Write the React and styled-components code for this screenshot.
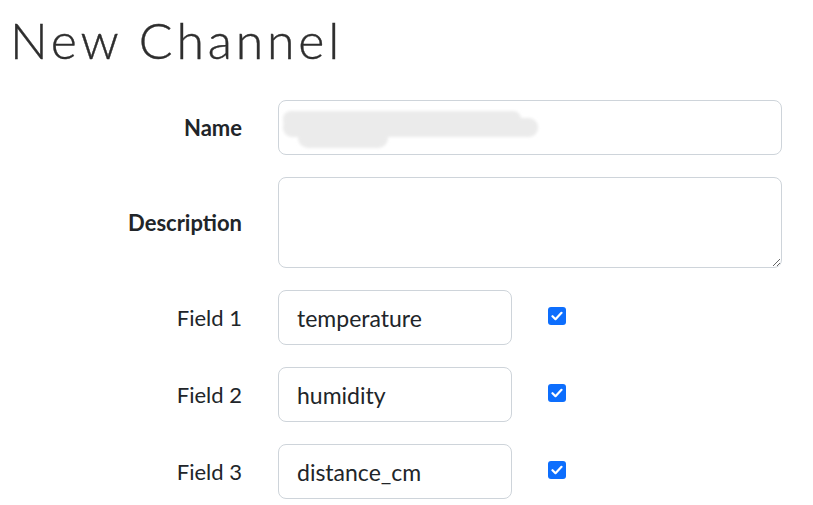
import React from "react";
import styled, { createGlobalStyle } from "styled-components";

const GlobalStyle = createGlobalStyle`
  body {
    margin: 0;
    background: #fff;
    font-family: "Lato", "Open Sans", sans-serif;
    color: #212529;
  }
`;

const Page = styled.div`
  width: 813px;
  height: 505px;
  overflow: hidden;
  padding: 0 0 0 10px;
  box-sizing: border-box;
`;

const Title = styled.h1`
  margin: 0;
  padding-top: 10px;
  font-family: "Lato", sans-serif;
  font-weight: 300;
  font-size: 50px;
  line-height: 60px;
  color: #2e2e2e;
  letter-spacing: 3.8px;
  -webkit-text-stroke: 0.4px #2e2e2e;
`;

const Form = styled.div`
  display: flex;
  flex-direction: column;
  gap: 22px;
  margin-top: 30px;
`;

const Row = styled.div`
  display: flex;
  align-items: center;
  gap: 36px;
`;

const Label = styled.label`
  width: 232px;
  text-align: right;
  font-size: 22px;
  font-weight: ${(p) => (p.$bold ? 700 : 400)};
  color: #212529;
`;

const Input = styled.div`
  position: relative;
  box-sizing: border-box;
  width: ${(p) => p.$width}px;
  height: 55px;
  border: 1px solid #ced4da;
  border-radius: 8px;
  padding: 0 18px;
  display: flex;
  align-items: center;
  font-size: 23px;
  color: #212529;
  background: #fff;
`;

const TextArea = styled.textarea`
  box-sizing: border-box;
  width: 504px;
  height: 91px;
  border: 1px solid #ced4da;
  border-radius: 8px;
  margin: 0;
  padding: 10px 18px;
  font-family: inherit;
  font-size: 21px;
  resize: vertical;
  outline: none;
`;

const Redacted = styled.svg`
  position: absolute;
  left: 2px;
  top: 8px;
`;

const Check = styled.span`
  width: 18px;
  height: 18px;
  border-radius: 3px;
  background: #0d6efd;
  display: flex;
  align-items: center;
  justify-content: center;
  margin: 0 0 3px 0;
`;

const fields = ["temperature", "humidity", "distance_cm"];

export default function App() {
  return (
    <Page>
      <GlobalStyle />
      <Title>New Channel</Title>
      <Form>
        <Row>
          <Label $bold>Name</Label>
          <Input $width={504}>
            <Redacted width="270" height="45" viewBox="0 0 270 45">
              <defs>
                <filter id="blur">
                  <feGaussianBlur stdDeviation="1.5" />
                </filter>
              </defs>
              <g fill="#ebebeb" filter="url(#blur)">
                <rect x="2" y="2" width="238" height="17" rx="8" />
                <rect x="2" y="9" width="255" height="19" rx="9" />
                <rect x="17" y="18" width="90" height="21" rx="10" />
              </g>
            </Redacted>
          </Input>
        </Row>
        <Row>
          <Label $bold>Description</Label>
          <TextArea />
        </Row>
        {fields.map((f, i) => (
          <Row key={f}>
            <Label>Field {i + 1}</Label>
            <Input $width={234}>{f}</Input>
            <Check>
              <svg width="12" height="10" viewBox="0 0 12 10">
                <path d="M1.5 5.2 L4.5 8.2 L10.5 1.8" fill="none" stroke="#fff" strokeWidth="2.2" strokeLinecap="round" strokeLinejoin="round" />
              </svg>
            </Check>
          </Row>
        ))}
      </Form>
    </Page>
  );
}
